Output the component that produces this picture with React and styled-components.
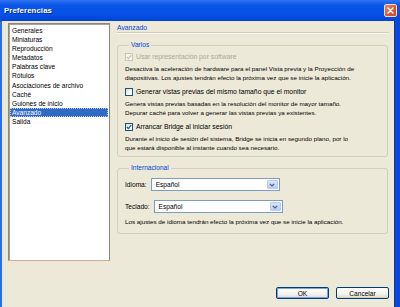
import React from "react";
import styled, { createGlobalStyle } from "styled-components";

const GlobalStyle = createGlobalStyle`
  html, body {
    margin: 0;
    padding: 0;
    background: #ece9d8;
  }
  body {
    font-family: "Liberation Sans", Arial, sans-serif;
    font-size: 6.25px;
    color: #000;
  }
`;

const categories = [
  "Generales",
  "Miniaturas",
  "Reproducción",
  "Metadatos",
  "Palabras clave",
  "Rótulos",
  "Asociaciones de archivo",
  "Caché",
  "Guiones de inicio",
  "Avanzado",
  "Salida",
];

const CloseIcon = () => (
  <svg width="7" height="7" viewBox="0 0 7 7">
    <path d="M1 1 L6 6 M6 1 L1 6" stroke="#fff" strokeWidth="1.4" strokeLinecap="round" />
  </svg>
);

const CheckMark = ({ disabled }) => (
  <svg width="6" height="6" viewBox="0 0 6 6">
    <path
      d="M0.8 3 L2.4 4.6 L5.2 1.2"
      fill="none"
      stroke={disabled ? "#c5c2b2" : "#214f98"}
      strokeWidth="1.2"
    />
  </svg>
);

const Chevron = () => (
  <svg width="6" height="4" viewBox="0 0 6 4">
    <path d="M0.8 0.8 L3 3 L5.2 0.8" fill="none" stroke="#4d6185" strokeWidth="1.2" />
  </svg>
);

const Checkbox = ({ checked, disabled, label }) => (
  <CheckRow $disabled={disabled}>
    <Box $disabled={disabled}>{checked && <CheckMark disabled={disabled} />}</Box>
    <span>{label}</span>
  </CheckRow>
);

const Select = ({ value }) => (
  <SelectBox>
    <SelectValue>{value}</SelectValue>
    <SelectArrow>
      <Chevron />
    </SelectArrow>
  </SelectBox>
);

const App = () => {
  return (
    <>
      <GlobalStyle />
      <Window>
        <TitleBar>
          <Title>Preferencias</Title>
          <CloseButton>
            <CloseIcon />
          </CloseButton>
        </TitleBar>
        <Body>
          <Main>
            <ListBox>
              {categories.map((c) => (
                <ListItem key={c} $selected={c === "Avanzado"}>
                  {c}
                </ListItem>
              ))}
            </ListBox>
            <Panel>
              <PanelHeader>Avanzado</PanelHeader>
              <Group>
                <Legend>Varios</Legend>
                <Checkbox checked disabled label="Usar representación por software" />
                <Desc>
                  Desactiva la aceleración de hardware para el panel Vista previa y la Proyección de
                  <br />
                  diapositivas. Los ajustes tendrán efecto la próxima vez que se inicie la aplicación.
                </Desc>
                <Checkbox label="Generar vistas previas del mismo tamaño que el monitor" />
                <Desc>
                  Genera vistas previas basadas en la resolución del monitor de mayor tamaño.
                  <br />
                  Depurar caché para volver a generar las vistas previas ya existentes.
                </Desc>
                <Checkbox checked label="Arrancar Bridge al iniciar sesión" />
                <Desc>
                  Durante el inicio de sesión del sistema, Bridge se inicia en segundo plano, por lo
                  <br />
                  que estará disponible al instante cuando sea necesario.
                </Desc>
              </Group>
              <Group $international>
                <Legend>Internacional</Legend>
                <FieldRow>
                  <FieldLabel>Idioma:</FieldLabel>
                  <Select value="Español" />
                </FieldRow>
                <FieldRow>
                  <FieldLabel>Teclado:</FieldLabel>
                  <Select value="Español" />
                </FieldRow>
                <Desc $gap={4}>
                  Los ajustes de idioma tendrán efecto la próxima vez que se inicie la aplicación.
                </Desc>
              </Group>
            </Panel>
          </Main>
          <Footer>
            <Button $default>OK</Button>
            <Button>Cancelar</Button>
          </Footer>
        </Body>
      </Window>
    </>
  );
};

const Window = styled.div`
  display: flex;
  flex-direction: column;
  width: 400px;
  height: 307px;
  overflow: hidden;
`;

const TitleBar = styled.div`
  display: flex;
  align-items: center;
  justify-content: space-between;
  height: 21px;
  padding: 0 3px 0 4px;
  box-sizing: border-box;
  background: linear-gradient(180deg, #2f74f2 0%, #0a55e8 25%, #0550e6 70%, #0444d4 100%);
`;

const Title = styled.div`
  color: #fff;
  font-weight: bold;
  font-size: 7.8px;
  letter-spacing: 0.1px;
  text-shadow: 1px 1px 0 #0a2a8a;
`;

const CloseButton = styled.div`
  display: flex;
  align-items: center;
  justify-content: center;
  width: 13px;
  height: 13px;
  box-sizing: border-box;
  border: 1px solid #f3d8cc;
  border-radius: 2px;
  background: linear-gradient(135deg, #e88a6a 0%, #d45a38 60%, #c44a2c 100%);
`;

const Body = styled.div`
  flex: 1;
  display: flex;
  flex-direction: column;
  padding: 2px 6px 0 6px;
  border-left: 2px solid #2f6fe6;
  border-right: 5px solid #0a48dc;
  box-shadow: inset -1px 0 0 #0836b8;
  background: #ece9d8;
`;

const Main = styled.div`
  display: flex;
  gap: 7px;
  height: 238px;
`;

const ListBox = styled.div`
  width: 102px;
  box-sizing: border-box;
  padding: 2px 1px;
  background: #fff;
  border: 1px solid #8b8778;
  border-bottom-color: #d7a98f;
  box-shadow: inset 1px 1px 0 #a8a597;
  font-size: 6.6px;
`;

const ListItem = styled.div`
  height: 9.1px;
  line-height: 9.1px;
  padding-left: 2px;
  white-space: nowrap;
  color: ${({ $selected }) => ($selected ? "#fff" : "#000")};
  background: ${({ $selected }) => ($selected ? "#316ac5" : "transparent")};
  outline: ${({ $selected }) => ($selected ? "1px dotted #b8cbe8" : "none")};
  outline-offset: -1px;
`;

const Panel = styled.div`
  flex: 1;
  display: flex;
  flex-direction: column;
`;

const PanelHeader = styled.div`
  height: 9px;
  line-height: 9px;
  color: #0046d5;
  font-size: 6.8px;
  border-bottom: 1px solid #d3cfbe;
  box-shadow: 0 1px 0 #f8f7f0;
`;

const Group = styled.fieldset`
  margin: ${({ $international }) => ($international ? "7px" : "8px")} 1px 0 0;
  padding: ${({ $international }) => ($international ? "6px 7px 7px" : "3px 7px 4px")};
  border: 1px solid #d0d0bf;
  border-radius: 3px;
  min-width: 0;
`;

const Legend = styled.legend`
  margin-left: 4px;
  padding: 0 2px;
  line-height: 8px;
  color: #0046d5;
  font-size: 6.6px;
`;

const CheckRow = styled.div`
  display: flex;
  align-items: center;
  gap: 3px;
  height: 9px;
  margin-top: 5px;
  font-size: 6.8px;
  color: ${({ $disabled }) => ($disabled ? "#aca899" : "#000")};

  &:first-of-type {
    margin-top: 0;
  }
`;

const Box = styled.div`
  display: flex;
  align-items: center;
  justify-content: center;
  width: 8px;
  height: 8px;
  box-sizing: border-box;
  border: 1px solid ${({ $disabled }) => ($disabled ? "#cac8bb" : "#1c5180")};
  background: ${({ $disabled }) =>
    $disabled ? "#f4f3ee" : "linear-gradient(135deg, #dcdcd7 0%, #fff 80%)"};
`;

const Desc = styled.div`
  margin-top: ${({ $gap }) => $gap ?? 3}px;
  line-height: 9px;
  white-space: nowrap;
`;

const FieldRow = styled.div`
  display: flex;
  align-items: center;
  gap: 4px;
  margin-bottom: 9px;

  & + & {
    margin-bottom: 0;
  }
`;

const FieldLabel = styled.span`
  font-size: 6.6px;
`;

const SelectBox = styled.div`
  display: flex;
  align-items: center;
  width: 129px;
  height: 13px;
  box-sizing: border-box;
  padding: 1px;
  background: #fff;
  border: 1px solid #7f9db9;
`;

const SelectValue = styled.div`
  flex: 1;
  padding-left: 3px;
  font-size: 6.6px;
`;

const SelectArrow = styled.div`
  display: flex;
  align-items: center;
  justify-content: center;
  width: 11px;
  height: 100%;
  border-radius: 1px;
  background: linear-gradient(180deg, #dbe5fb 0%, #b7cbf6 100%);
  border: 1px solid #b9ccf3;
  box-sizing: border-box;
`;

const Footer = styled.div`
  display: flex;
  justify-content: flex-end;
  gap: 7px;
  margin-top: 26px;
`;

const Button = styled.div`
  display: flex;
  align-items: center;
  justify-content: center;
  width: 53px;
  height: 12px;
  box-sizing: border-box;
  border: 1px solid #003c74;
  border-radius: 2px;
  background: linear-gradient(180deg, #ffffff 0%, #f3f2ec 60%, #dedbcc 100%);
  box-shadow: ${({ $default }) =>
    $default ? "inset 0 0 0 1px #7ea2e6" : "inset 0 -1px 0 #d6d0c0"};
  font-size: 6.6px;
`;

export default App;
